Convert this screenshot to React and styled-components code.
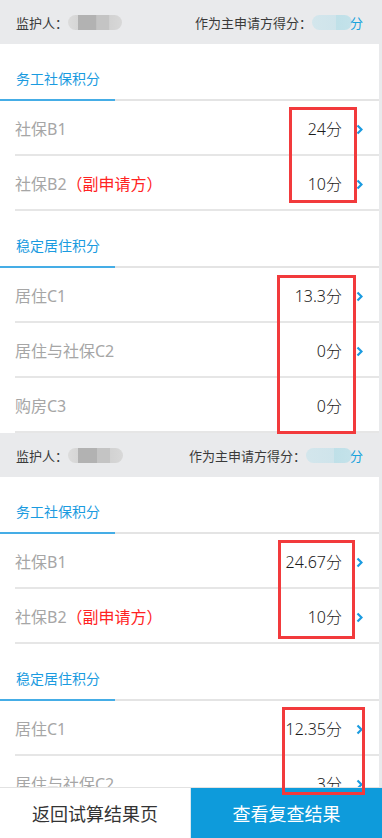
import React from "react";
import styled, { createGlobalStyle } from "styled-components";

const Global = createGlobalStyle`
  html, body {
    margin: 0;
    padding: 0;
    background: #e9eaec;
    font-family: "Noto Sans", "Noto Sans CJK SC", sans-serif;
  }
`;

const Page = styled.div`
  position: relative;
  padding-bottom: 50px;
`;

const Guardian = styled.div`
  height: 44px;
  box-sizing: border-box;
  padding: 0 19px 0 16px;
  background: #e9eaec;
  display: flex;
  align-items: center;
  justify-content: space-between;
  font-size: 13px;
  color: #3a3a3a;
`;

const Who = styled.div`
  display: flex;
  align-items: center;
`;

const Blur = styled.span`
  display: inline-block;
  width: ${(p) => p.w}px;
  height: 15px;
  border-radius: 8px;
  background: ${(p) =>
    p.blue
      ? "linear-gradient(90deg, #d3e6ec 0%, #cfe4eb 60%, #bfe0e8 61%, #c4e2ea 100%)"
      : "linear-gradient(90deg, #dcdcdc 0%, #d6d6d6 18%, #b2b2b2 19%, #b2b2b2 52%, #c4c4c4 53%, #c4c4c4 76%, #d2d2d2 77%, #d8d8d8 100%)"};
`;

const Unit = styled.span`
  color: #1aa3dc;
  margin-left: -2px;
`;

const Section = styled.div`
  background: #fff;
  margin-right: 3px;
`;

const TabHead = styled.div`
  padding-top: 25px;
  border-bottom: 2px solid #e4e4e4;
`;

const TabLabel = styled.div`
  width: 115px;
  box-sizing: border-box;
  padding: 0 0 10px 16px;
  margin-bottom: -2px;
  line-height: 20px;
  font-size: 14px;
  color: #1a9be0;
  border-bottom: 2px solid #45ade6;
`;

const Row = styled.div`
  height: 55px;
  box-sizing: border-box;
  margin-left: 15px;
  padding-right: 16px;
  border-bottom: 2px solid #e6e6e6;
  display: flex;
  align-items: center;
  font-size: 16px;
`;

const Label = styled.div`
  flex: 1;
  color: #a6a6a6;
`;

const Deputy = styled.span`
  color: #ff2323;
`;

const Value = styled.div`
  color: #1c1c1c;
  font-weight: 300;
`;

const Arrow = styled.div`
  width: 7px;
  margin-left: 14px;
  padding-top: 3px;
  display: flex;
  align-items: center;
`;

const Mark = styled.div`
  position: absolute;
  left: ${(p) => p.x}px;
  top: ${(p) => p.y}px;
  width: ${(p) => p.w}px;
  height: ${(p) => p.h}px;
  box-sizing: border-box;
  border: 3px solid #f23a3c;
  pointer-events: none;
  z-index: 20;
`;

const Bar = styled.div`
  position: fixed;
  left: 0;
  right: 0;
  bottom: 0;
  height: 50px;
  display: grid;
  grid-template-columns: 190px 1fr;
  border-top: 1px solid #e2e2e2;
  z-index: 10;
`;

const BarButton = styled.button`
  border: none;
  margin: 0;
  font-family: inherit;
  font-size: 18px;
  background: ${(p) => (p.primary ? "#0e9bdb" : "#fff")};
  color: ${(p) => (p.primary ? "#fff" : "#333")};
  border-left: ${(p) => (p.primary ? "1px solid #d8e8f0" : "none")};
`;

const Chevron = () => (
  <svg width="7" height="11" viewBox="0 0 7 11">
    <polyline points="1.5,1.5 5.5,5.5 1.5,9.5" fill="none" stroke="#1a9be0" strokeWidth="2.2" />
  </svg>
);

const groups = [
  {
    sections: [
      {
        title: "务工社保积分",
        rows: [
          { label: "社保B1", value: "24分", more: true },
          { label: "社保B2", deputy: true, value: "10分", more: true },
        ],
      },
      {
        title: "稳定居住积分",
        rows: [
          { label: "居住C1", value: "13.3分", more: true },
          { label: "居住与社保C2", value: "0分", more: true },
          { label: "购房C3", value: "0分" },
        ],
      },
    ],
  },
  {
    sections: [
      {
        title: "务工社保积分",
        rows: [
          { label: "社保B1", value: "24.67分", more: true },
          { label: "社保B2", deputy: true, value: "10分", more: true },
        ],
      },
      {
        title: "稳定居住积分",
        rows: [
          { label: "居住C1", value: "12.35分", more: true },
          { label: "居住与社保C2", value: "3分", more: true },
        ],
      },
    ],
  },
];

const marks = [
  { x: 289, y: 107, w: 68, h: 96 },
  { x: 277, y: 275, w: 79, h: 159 },
  { x: 278, y: 540, w: 77, h: 99 },
  { x: 282, y: 707, w: 83, h: 88 },
];

export default function App() {
  return (
    <>
      <Global />
      <Page>
        {groups.map((g, gi) => (
          <div key={gi}>
            <Guardian>
              <Who>
                监护人：<Blur w={gi ? 55 : 54} />
              </Who>
              <Who>
                作为主申请方得分：<Blur w={gi ? 46 : 40} blue />
                <Unit>分</Unit>
              </Who>
            </Guardian>
            {g.sections.map((s) => (
              <Section key={s.title}>
                <TabHead>
                  <TabLabel>{s.title}</TabLabel>
                </TabHead>
                {s.rows.map((r) => (
                  <Row key={r.label}>
                    <Label>
                      {r.label}
                      {r.deputy && <Deputy>（副申请方）</Deputy>}
                    </Label>
                    <Value>{r.value}</Value>
                    <Arrow>{r.more && <Chevron />}</Arrow>
                  </Row>
                ))}
              </Section>
            ))}
          </div>
        ))}
        {marks.map((m, i) => (
          <Mark key={i} {...m} />
        ))}
      </Page>
      <Bar>
        <BarButton>返回试算结果页</BarButton>
        <BarButton primary>查看复查结果</BarButton>
      </Bar>
    </>
  );
}
